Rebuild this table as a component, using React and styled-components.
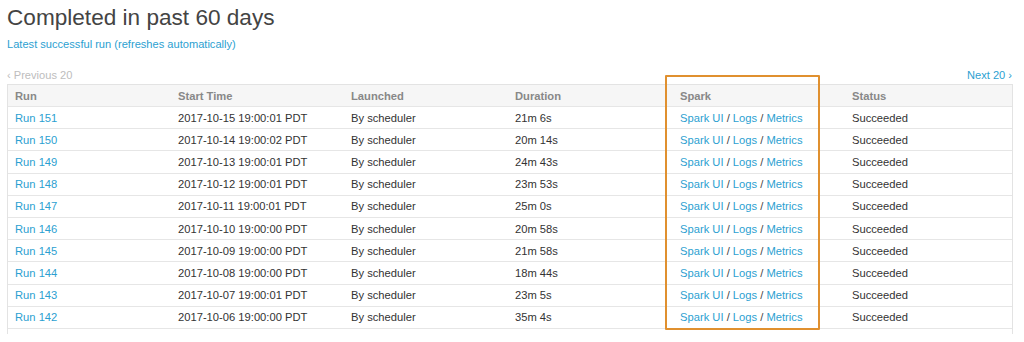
import React from "react";
import styled, { createGlobalStyle } from "styled-components";

const Global = createGlobalStyle`
  html, body { margin: 0; padding: 0; background: #fff; }
  body { font-family: "Liberation Sans", Arial, sans-serif; color: #333; }
`;

const Page = styled.div`
  position: relative;
  padding: 4px 11px 0 7px;
  width: 1024px;
  box-sizing: border-box;
`;

const Title = styled.h1`
  margin: 0;
  font-size: 22.6px;
  font-weight: 400;
  color: #444;
  line-height: 27px;
`;

const Link = styled.a`
  color: #2c9fd1;
  text-decoration: none;
  cursor: pointer;
`;

const SubLink = styled(Link)`
  display: block;
  font-size: 11.1px;
  margin-top: 7px;
  line-height: 13px;
`;

const Pager = styled.div`
  display: flex;
  justify-content: space-between;
  align-items: flex-end;
  margin-top: 16px;
  height: 17px;
  padding-bottom: 2px;
  box-sizing: border-box;
  font-size: 11.1px;
`;

const PagerItem = styled.span`
  color: ${(p) => (p.$disabled ? "#bdbdbd" : "#2c9fd1")};
  line-height: 13px;
  margin-right: ${(p) => (p.$disabled ? "0" : "1px")};
`;

const Table = styled.div`
  border: 1px solid #e3e3e3;
  border-bottom: none;
  font-size: 11.2px;
`;

const cols = "163px 173px 164px 165px 172px 1fr";

const Row = styled.div`
  display: grid;
  grid-template-columns: ${cols};
  height: ${(p) => (p.$head ? "22px" : "22.2px")};
  box-sizing: border-box;
  align-items: center;
  border-bottom: 1px solid #e6e6e6;
  background: ${(p) => (p.$head ? "#f6f6f6" : "#fff")};
`;

const HeadCell = styled.div`
  padding-left: 7px;
  color: #888;
  font-weight: 700;
`;

const Cell = styled.div`
  padding-left: 7px;
  color: #333;
  white-space: nowrap;
`;

const Sep = styled.span`
  color: #444;
`;

const Tail = styled.div`
  height: 5px;
  border-left: 1px solid #e3e3e3;
  border-right: 1px solid #e3e3e3;
`;

const Highlight = styled.div`
  position: absolute;
  left: 665px;
  top: 75px;
  width: 155px;
  height: 255px;
  border: 2px solid #e0902f;
  box-sizing: border-box;
  border-radius: 1px;
  pointer-events: none;
`;

const rows = [
  [151, "2017-10-15 19:00:01 PDT", "21m 6s"],
  [150, "2017-10-14 19:00:02 PDT", "20m 14s"],
  [149, "2017-10-13 19:00:01 PDT", "24m 43s"],
  [148, "2017-10-12 19:00:01 PDT", "23m 53s"],
  [147, "2017-10-11 19:00:01 PDT", "25m 0s"],
  [146, "2017-10-10 19:00:00 PDT", "20m 58s"],
  [145, "2017-10-09 19:00:00 PDT", "21m 58s"],
  [144, "2017-10-08 19:00:00 PDT", "18m 44s"],
  [143, "2017-10-07 19:00:01 PDT", "23m 5s"],
  [142, "2017-10-06 19:00:00 PDT", "35m 4s"],
];

export default function App() {
  return (
    <Page>
      <Global />
      <Title>Completed in past 60 days</Title>
      <SubLink>Latest successful run (refreshes automatically)</SubLink>
      <Pager>
        <PagerItem $disabled>‹ Previous 20</PagerItem>
        <PagerItem>Next 20 ›</PagerItem>
      </Pager>
      <Table>
        <Row $head>
          <HeadCell>Run</HeadCell>
          <HeadCell>Start Time</HeadCell>
          <HeadCell>Launched</HeadCell>
          <HeadCell>Duration</HeadCell>
          <HeadCell>Spark</HeadCell>
          <HeadCell>Status</HeadCell>
        </Row>
        {rows.map(([n, t, d]) => (
          <Row key={n}>
            <Cell>
              <Link>Run {n}</Link>
            </Cell>
            <Cell>{t}</Cell>
            <Cell>By scheduler</Cell>
            <Cell>{d}</Cell>
            <Cell>
              <Link>Spark UI</Link> <Sep>/</Sep> <Link>Logs</Link>{" "}
              <Sep>/</Sep> <Link>Metrics</Link>
            </Cell>
            <Cell>Succeeded</Cell>
          </Row>
        ))}
      </Table>
      <Tail />
      <Highlight />
    </Page>
  );
}
